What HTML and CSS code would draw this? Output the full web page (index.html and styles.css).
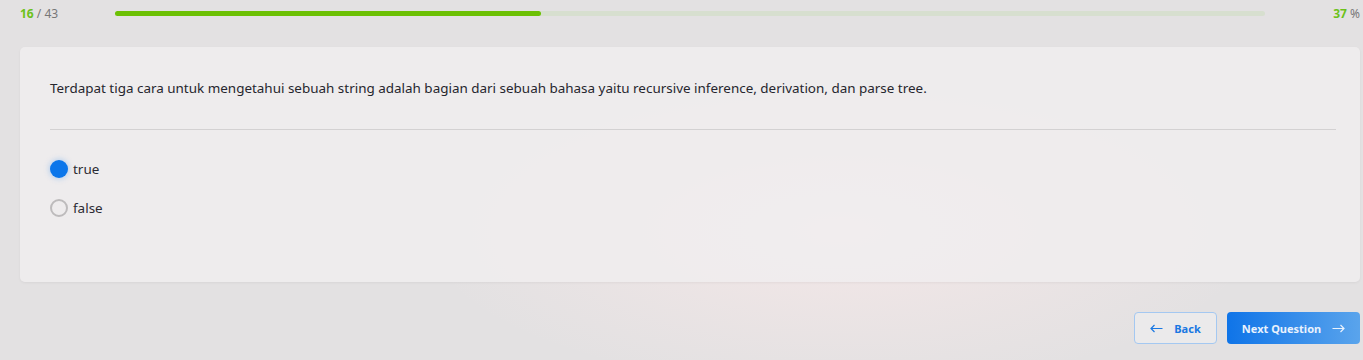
FILE: index.html
```html
<!DOCTYPE html>
<html lang="en">
<head>
    <meta charset="UTF-8">
    <meta name="viewport" content="width=device-width, initial-scale=1.0">
    <title>Quiz</title>
    <link rel="stylesheet" href="styles.css">
</head>
<body>
    <div class="progress">
        <div class="progress-count"><b>16</b> / 43</div>
        <div class="progress-track"><div class="progress-fill" style="width: 37%"></div></div>
        <div class="progress-pct"><b>37</b> %</div>
    </div>

    <div class="card">
        <p class="question">Terdapat tiga cara untuk mengetahui sebuah string adalah bagian dari sebuah bahasa yaitu recursive inference, derivation, dan parse tree.</p>
        <hr class="divider">
        <label class="option">
            <input type="radio" name="answer" value="true" checked>
            <span>true</span>
        </label>
        <label class="option">
            <input type="radio" name="answer" value="false">
            <span>false</span>
        </label>
    </div>

    <div class="actions">
        <button class="btn btn-back">
            <svg class="arrow" width="13" height="9" viewBox="0 0 13 9"><path d="M12.5 4.5H1M4.5 1L1 4.5L4.5 8" fill="none" stroke="currentColor" stroke-width="1.2"/></svg>
            Back
        </button>
        <button class="btn btn-next">
            Next Question
            <svg class="arrow" width="13" height="9" viewBox="0 0 13 9"><path d="M0.5 4.5H12M8.5 1L12 4.5L8.5 8" fill="none" stroke="currentColor" stroke-width="1.2"/></svg>
        </button>
    </div>
</body>
</html>
```

FILE: styles.css
```css
* {
    box-sizing: border-box;
}
body {
    margin: 0;
    height: 360px;
    padding: 0 3px 0 20px;
    font-family: "Noto Sans", Arial, sans-serif;
    color: #2b2b33;
    background-color: #e3e1e2;
    background-image: radial-gradient(ellipse 420px 160px at 840px 230px, rgba(246, 232, 232, 0.9), rgba(227, 225, 226, 0));
}
.progress {
    display: flex;
    align-items: center;
    height: 27px;
    font-size: 12px;
    color: #777;
}
.progress b {
    color: #6cc11b;
}
.progress-count {
    width: 95px;
}
.progress-track {
    flex: 1;
    height: 5px;
    border-radius: 3px;
    background: #d7dfcf;
    margin-right: 66px;
}
.progress-fill {
    height: 100%;
    border-radius: 3px;
    background: #6cc004;
}
.progress-pct {
    width: 29px;
    text-align: right;
}
.card {
    margin-top: 20px;
    width: 1340px;
    height: 235px;
    padding: 30px 24px 0 30px;
    background: rgba(240, 237, 238, 0.85);
    border-radius: 5px;
    box-shadow: 0 1px 3px rgba(0, 0, 0, 0.05);
}
.question {
    margin: 0;
    font-size: 13.45px;
    line-height: 22px;
    color: #26262e;
}
.divider {
    margin: 30px 0 29px;
    border: none;
    border-top: 1px solid #d3d1d2;
}
.option {
    display: flex;
    align-items: center;
    gap: 5px;
    height: 20px;
    margin-bottom: 19px;
    font-size: 13.45px;
    color: #2b2b33;
}
.option input {
    appearance: none;
    margin: 0;
    width: 18px;
    height: 18px;
    border-radius: 50%;
    border: 2px solid #bdbbbc;
    background: transparent;
}
.option input:checked {
    border: none;
    background: #0b76ea;
    box-shadow: 0 0 6px rgba(11, 118, 234, 0.35);
}
.actions {
    display: flex;
    justify-content: flex-end;
    gap: 10px;
    margin-top: 30px;
}
.btn {
    display: flex;
    align-items: center;
    justify-content: center;
    height: 32px;
    border-radius: 4px;
    font-family: "Noto Sans", Arial, sans-serif;
    font-size: 11px;
    font-weight: bold;
    padding: 0;
}
.btn-back {
    width: 83px;
    gap: 11px;
    border: 1px solid #a4c8f1;
    background: #ebeaeb;
    color: #1a78e2;
}
.btn-next {
    width: 133px;
    gap: 11px;
    border: none;
    color: #e9f2fd;
    background: linear-gradient(90deg, #0f74e8, #5aa4ec);
}
```
